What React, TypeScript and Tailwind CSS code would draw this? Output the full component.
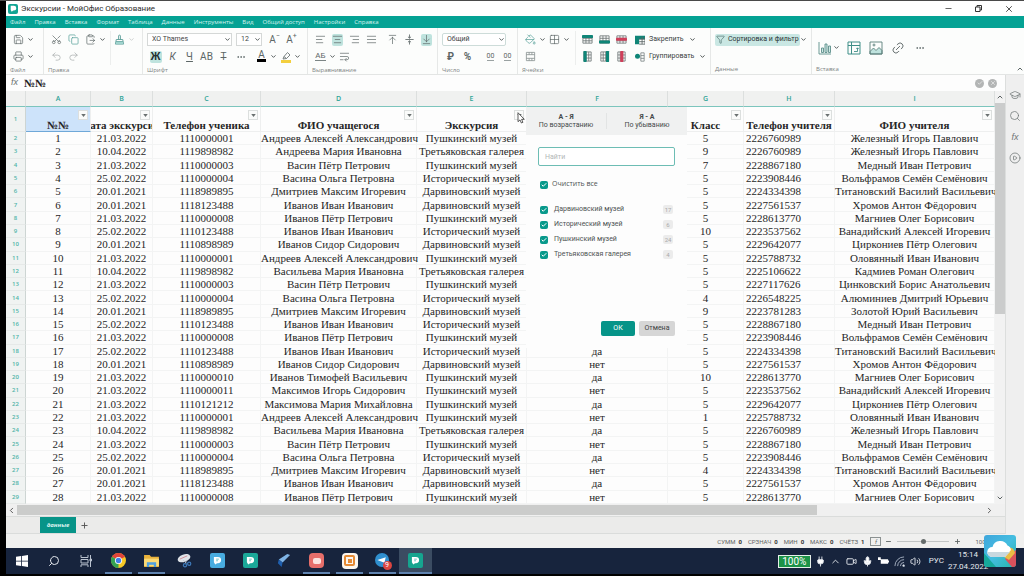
import type { ReactNode } from "react"
import clsx from "clsx"
import {
  AlignCenter,
  AlignJustify,
  AlignLeft,
  AlignRight,
  ArrowDownToLine,
  ArrowUpToLine,
  Check,
  ChevronDown,
  ChevronLeft,
  ChevronRight,
  ChevronUp,
  CirclePlay,
  ClipboardPaste,
  Copy,
  Ellipsis,
  Funnel,
  Grid2x2,
  GraduationCap,
  Link2,
  MessageSquare,
  Mic,
  Minus,
  PaintBucket,
  Plug,
  Plus,
  Printer,
  Redo2,
  Save,
  Scissors,
  Search,
  Undo2,
  Video,
  Volume2,
  WrapText,
  X,
} from "lucide-react"

const menu = [
  "Файл",
  "Правка",
  "Вставка",
  "Формат",
  "Таблица",
  "Данные",
  "Инструменты",
  "Вид",
  "Общий доступ",
  "Настройки",
  "Справка",
]

const letters = ["A", "B", "C", "D", "E", "F", "G", "H", "I"]
const headers = [
  "№№",
  "Дата экскурсии",
  "Телефон ученика",
  "ФИО учащегося",
  "Экскурсия",
  "",
  "Класс",
  "Телефон учителя",
  "ФИО учителя",
]

const P = "Пушкинский музей"
const I = "Исторический музей"
const D = "Дарвиновский музей"
const T = "Третьяковская галерея"

const andreev = "Андреев Алексей Александрович"
const vasin = "Васин Пётр Петрович"
const vasina = "Васина Ольга Петровна"
const dmitriev = "Дмитриев Максим Игоревич"
const ivanov = "Иванов Иван Иванович"
const petrovich = "Иванов Пётр Петрович"
const sidor = "Иванов Сидор Сидорович"
const vasilieva = "Васильева Мария Ивановна"

const teachers = {
  iron: ["2226760989", "Железный Игорь Павлович"],
  copper: ["2228867180", "Медный Иван Петрович"],
  tungsten: ["2223908446", "Вольфрамов Семён Семёнович"],
  titanium: ["2224334398", "Титановский Василий Васильевич"],
  chrome: ["2227561537", "Хромов Антон Фёдорович"],
  magnesium: ["2228613770", "Магниев Олег Борисович"],
  vanadium: ["2223537562", "Ванадийский Алексей Игоревич"],
  zirconium: ["2229642077", "Циркониев Пётр Олегович"],
  tin: ["2225788732", "Оловянный Иван Иванович"],
  cadmium: ["2225106622", "Кадмиев Роман Олегович"],
  zinc: ["2227117626", "Цинковский Борис Анатольевич"],
  aluminium: ["2226548225", "Алюминиев Дмитрий Юрьевич"],
  gold: ["2223781283", "Золотой Юрий Васильевич"],
}

const rows: string[][] = [
  ["21.03.2022", "1110000001", andreev, P, "", "5", ...teachers.iron],
  ["10.04.2022", "1119898982", "Андреева Мария Ивановна", T, "", "9", ...teachers.iron],
  ["21.03.2022", "1110000003", vasin, P, "", "7", ...teachers.copper],
  ["25.02.2022", "1110000004", vasina, I, "", "5", ...teachers.tungsten],
  ["20.01.2021", "1118989895", dmitriev, D, "", "5", ...teachers.titanium],
  ["20.01.2021", "1118123488", ivanov, D, "", "5", ...teachers.chrome],
  ["21.03.2022", "1110000008", petrovich, P, "", "5", ...teachers.magnesium],
  ["25.02.2022", "1110123488", ivanov, I, "", "10", ...teachers.vanadium],
  ["20.01.2021", "1110898989", sidor, D, "", "5", ...teachers.zirconium],
  ["21.03.2022", "1110000001", andreev, P, "", "5", ...teachers.tin],
  ["10.04.2022", "1119898982", vasilieva, T, "", "5", ...teachers.cadmium],
  ["21.03.2022", "1110000003", vasin, P, "", "5", ...teachers.zinc],
  ["25.02.2022", "1110000004", vasina, I, "", "4", ...teachers.aluminium],
  ["20.01.2021", "1118989895", dmitriev, D, "", "9", ...teachers.gold],
  ["25.02.2022", "1110123488", ivanov, I, "", "5", ...teachers.copper],
  ["21.03.2022", "1110000008", petrovich, P, "", "5", ...teachers.tungsten],
  ["25.02.2022", "1110123488", ivanov, I, "да", "5", ...teachers.titanium],
  ["20.01.2021", "1110898989", sidor, D, "нет", "5", ...teachers.chrome],
  ["21.03.2022", "1110000010", "Иванов Тимофей Васильевич", P, "да", "10", ...teachers.magnesium],
  ["21.03.2022", "1110000011", "Максимов Игорь Сидорович", P, "нет", "5", ...teachers.vanadium],
  ["21.03.2022", "1110121212", "Максимова Мария Михайловна", P, "да", "5", ...teachers.zirconium],
  ["21.03.2022", "1110000001", andreev, P, "нет", "1", ...teachers.tin],
  ["10.04.2022", "1119898982", vasilieva, T, "да", "5", ...teachers.iron],
  ["21.03.2022", "1110000003", vasin, P, "нет", "5", ...teachers.copper],
  ["25.02.2022", "1110000004", vasina, I, "да", "5", ...teachers.tungsten],
  ["20.01.2021", "1118989895", dmitriev, D, "нет", "4", ...teachers.titanium],
  ["20.01.2021", "1118123488", ivanov, D, "да", "5", ...teachers.chrome],
  ["21.03.2022", "1110000008", petrovich, P, "нет", "5", ...teachers.magnesium],
]

const filters = [
  [D, "17"],
  [I, "6"],
  [P, "24"],
  [T, "4"],
]

const stats = [
  ["СУММ", "0"],
  ["СРЗНАЧ", "0"],
  ["МИН", "0"],
  ["МАКС", "0"],
  ["СЧЁТЗ", "1"],
]

const ic = "size-[11px] stroke-[1.5]"

function Tool({ label, active, children }: { label: string; active?: boolean; children: ReactNode }) {
  return (
    <button
      aria-label={label}
      className="flex h-[17px] w-[17px] shrink-0 items-center justify-center text-[10px] text-[#5c6666]"
    >
      <span className={clsx("flex h-3 items-center justify-center rounded-xs", active && "bg-[#bfe3de]")}>
        {children}
      </span>
    </button>
  )
}

function More({ label }: { label: string }) {
  return (
    <button aria-label={label} className="flex h-[17px] w-[7px] shrink-0 items-center justify-center">
      <ChevronDown className="size-[7px] shrink-0 stroke-[3] text-[#454d4d]" />
    </button>
  )
}

function Group({ title, className, children }: { title: string; className: string; children: ReactNode }) {
  return (
    <section
      className={clsx("flex shrink-0 flex-col justify-between border-r border-[#e6e8e7] pt-[3px] pl-1", className)}
    >
      <div>{children}</div>
      <h2 className="font-['Open_Sans',sans-serif] text-[6px] leading-[10px] text-[#7c8383]">{title}</h2>
    </section>
  )
}

function Row({ children }: { children: ReactNode }) {
  return <div className="flex h-[17px] items-center">{children}</div>
}

/* Row and column operations: a small grid with one band highlighted */
function CellsIcon({ vertical, band, color }: { vertical?: boolean; band: number; color: string }) {
  return (
    <svg viewBox="0 0 12 12" className="size-[11px]" fill="none">
      <g transform={vertical ? "rotate(90 6 6)" : undefined}>
        <path d="M1 2h10v8H1zM1 4.7h10M1 7.4h10M4.3 2v8M7.7 2v8" stroke="#6d7676" strokeWidth="0.9" />
        <rect x="0" y={band} width="12" height="3.4" rx="0.5" fill={color} />
      </g>
    </svg>
  )
}

function FilterButton({ name }: { name: string }) {
  return (
    <button
      aria-label={"Фильтр: " + name}
      className="absolute top-[3px] right-[2px] flex size-[10px] items-center justify-center border border-[#dcdfde] bg-[#fafbfa]"
    >
      <svg viewBox="0 0 6 4" className="h-[3px] w-[5px]">
        <path d="M0 0h6L3 4z" fill="#6a7070" />
      </svg>
    </button>
  )
}

function Ribbon() {
  return (
    <div className="flex h-[47px] shrink-0 overflow-hidden border-b border-[#e3e5e4] bg-[#fcfdfc]">
      <Group title="Файл" className="w-[38px]">
        <Row>
          <Tool label="Сохранить"><Save className={ic} /></Tool>
          <More label="Сохранить как" />
        </Row>
        <Row>
          <Tool label="Печать"><Printer className={ic} /></Tool>
          <More label="Настройки печати" />
        </Row>
      </Group>

      <Group title="Правка" className="w-[99px]">
        <div className="flex">
          <div className="flex w-[63px] flex-col border-r border-[#eceeed]">
            <Row>
              <Tool label="Вырезать"><Scissors className={clsx(ic, "-rotate-90")} /></Tool>
              <Tool label="Копировать"><Copy className={clsx(ic, "text-[#4f9c95]")} /></Tool>
              <Tool label="Вставить"><ClipboardPaste className={ic} /></Tool>
              <More label="Вставить как" />
            </Row>
            <Row>
              <Tool label="Отменить"><Undo2 className={clsx(ic, "text-[#a3a9a9]")} /></Tool>
              <Tool label="Повторить"><Redo2 className={clsx(ic, "text-[#a3a9a9]")} /></Tool>
            </Row>
          </div>
          <Row>
            <Tool label="Копировать формат">
              <svg viewBox="0 0 12 12" className="size-[11px]" fill="none" stroke="#5c9f99">
                <path d="M5 6V2.2a1 1 0 0 1 2 0V6M2.5 6h7l1 5h-9zM2.2 8.2h7.6" />
                <path d="M2.3 8.5h7.4l.5 2.3H1.9z" fill="#9fd3cd" stroke="none" />
              </svg>
            </Tool>
            <ChevronDown className="size-[7px] stroke-[3] text-[#c9cdcc]" />
          </Row>
        </div>
      </Group>

      <Group title="Шрифт" className="w-[165px]">
        <div className="flex h-[17px] items-center gap-1">
          <div className="relative w-[85px]">
            <select
              aria-label="Шрифт"
              className="block h-[13px] w-full appearance-none border border-[#d5d8d7] bg-white pl-1 text-[7px] text-[#3e4444]"
            >
              <option>XO Thames</option>
            </select>
            <ChevronDown className="pointer-events-none absolute top-[3px] right-px size-[7px] stroke-[3] text-[#454d4d]" />
          </div>
          <div className="relative w-[26px]">
            <select
              aria-label="Размер шрифта"
              className="block h-[13px] w-full appearance-none border border-[#d5d8d7] bg-white pl-1 text-[7px] text-[#3e4444]"
            >
              <option>12</option>
            </select>
            <ChevronDown className="pointer-events-none absolute top-[3px] right-px size-[7px] stroke-[3] text-[#454d4d]" />
          </div>
          <div className="flex">
            <Tool label="Уменьшить шрифт">А<sup className="text-[7px]">−</sup></Tool>
            <Tool label="Увеличить шрифт">А<sup className="text-[7px]">+</sup></Tool>
          </div>
        </div>
        <Row>
          <Tool label="Полужирный" active><b className="w-3 text-[#243232]">Ж</b></Tool>
          <Tool label="Курсив"><i>К</i></Tool>
          <Tool label="Подчёркнутый"><u>Ч</u></Tool>
          <Tool label="Прописные">АВ</Tool>
          <Tool label="Зачёркнутый"><s>Т</s></Tool>
          <Tool label="Ещё"><Ellipsis className="size-[10px]" /></Tool>
          <div className="flex pl-1">
            <Tool label="Цвет текста"><span className="border-b-3 border-black px-px leading-[8px]">А</span></Tool>
            <More label="Выбрать цвет текста" />
            <Tool label="Цвет выделения">
              <svg viewBox="0 0 12 12" className="size-3" fill="none">
                <path d="M4 5.5 7.5 1.5 10 4 6.5 7.5zM4 5.5 3 8l3.5-.5" stroke="#6d7676" strokeWidth="0.9" />
                <path d="M1 9h10v3H1z" fill="#f3cf3e" />
              </svg>
            </Tool>
            <More label="Выбрать цвет выделения" />
          </div>
        </Row>
      </Group>

      <Group title="Выравнивание" className="w-[130px]">
        <Row>
          <Tool label="По левому краю"><AlignLeft className={ic} /></Tool>
          <Tool label="По центру" active><AlignCenter className={ic} /></Tool>
          <Tool label="По правому краю"><AlignRight className={ic} /></Tool>
          <Tool label="По ширине"><AlignJustify className={ic} /></Tool>
          <div className="flex pl-1">
            <Tool label="По верхнему краю"><ArrowUpToLine className={ic} /></Tool>
            <Tool label="По середине">
              <svg viewBox="0 0 12 12" className="size-[11px]" fill="none" stroke="#5c6666">
                <path d="M1.5 6h9M6 .5V4.5M4.3 3 6 4.6 7.7 3M6 11.5V7.5M4.3 9 6 7.4 7.7 9" strokeWidth="0.9" />
              </svg>
            </Tool>
            <Tool label="По нижнему краю" active><ArrowDownToLine className={ic} /></Tool>
          </div>
        </Row>
        <Row>
          <Tool label="Направление текста"><span className="border-b border-[#7c8585] text-[8px] leading-[8px]">АБ</span></Tool>
          <More label="Выбрать направление" />
          <Tool label="Перенос текста"><WrapText className={ic} /></Tool>
        </Row>
      </Group>

      <Group title="Число" className="w-[80px]">
        <Row>
          <div className="relative w-[64px]">
            <select
              aria-label="Формат числа"
              className="block h-[13px] w-full appearance-none rounded-xs border border-[#cddcd9] bg-white pl-1 text-[7px] text-[#3e4444]"
            >
              <option>Общий</option>
            </select>
            <ChevronDown className="pointer-events-none absolute top-[3px] right-px size-[7px] stroke-[3] text-[#454d4d]" />
          </div>
        </Row>
        <Row>
          <Tool label="Денежный"><b>₽</b></Tool>
          <Tool label="Процентный"><b>%</b></Tool>
          <div className="flex pl-[6px]">
            <Tool label="Меньше знаков"><span className="border-b border-[#9aa2a2] text-[7px] leading-[8px]">00</span></Tool>
            <Tool label="Больше знаков"><span className="border-b border-[#9aa2a2] text-[7px] leading-[8px]">00</span></Tool>
          </div>
        </Row>
      </Group>

      <Group title="Ячейки" className="w-[193px]">
        <div className="flex">
          <div className="w-[54px] border-r border-[#eceeed]">
            <Row>
              <Tool label="Заливка"><PaintBucket className={clsx(ic, "text-[#4f9c95]")} /></Tool>
              <More label="Выбрать заливку" />
              <Tool label="Границы"><Grid2x2 className={ic} /></Tool>
              <More label="Выбрать границы" />
            </Row>
            <Row>
              <Tool label="Объединить">
                <svg viewBox="0 0 12 12" className="size-[11px]" fill="none" stroke="#8b9393" strokeWidth="0.9">
                  <path d="M1.5 1.5h9v9h-9zM1.5 4h9M1.5 8h9M4.5 1.5V4M7.5 1.5V4M4.5 8v2.5M7.5 8v2.5" />
                </svg>
              </Tool>
            </Row>
          </div>
          <div className="w-[57px] pl-[3px]">
            <Row>
              <Tool label="Строка выше"><CellsIcon band={1} color="#0f8577" /></Tool>
              <Tool label="Строка ниже"><CellsIcon band={7} color="#0f8577" /></Tool>
              <Tool label="Удалить строку"><CellsIcon band={4} color="#cf3f5a" /></Tool>
            </Row>
            <Row>
              <Tool label="Столбец слева"><CellsIcon vertical band={7} color="#0f8577" /></Tool>
              <Tool label="Столбец справа"><CellsIcon vertical band={1} color="#0f8577" /></Tool>
              <Tool label="Удалить столбец"><CellsIcon vertical band={4} color="#cf3f5a" /></Tool>
            </Row>
          </div>
          <div className="pl-[2px] text-[7px] text-[#3a4141]">
            <button className="flex h-[17px] items-center gap-1">
              <svg viewBox="0 0 12 12" className="size-[10px]">
                <path d="M0 1h12v4H5v6H0z" fill="#0f8577" />
                <path d="M5 5h7M5 8h7M8.5 2v9M5 11h7V2" stroke="#5c6666" fill="none" />
              </svg>
              Закрепить
              <ChevronDown className="ml-px size-[7px] stroke-[3]" />
            </button>
            <button className="flex h-[17px] items-center gap-1">
              <svg viewBox="0 0 12 12" className="size-[10px]" fill="none">
                <circle cx="3" cy="5" r="3" fill="#0f8577" />
                <path d="M7 1h4v10H7zM7 4.3h4M7 7.6h4" stroke="#7c8585" />
              </svg>
              Группировать
              <ChevronDown className="ml-px size-[7px] stroke-[3]" />
            </button>
          </div>
        </div>
      </Group>

      <Group title="Данные" className="w-[101px]">
        <Row>
          <button className="flex h-3 items-center gap-[3px] rounded-xs bg-[#c9e7e3] px-px text-[7px] whitespace-nowrap text-[#2b3535]">
            <Funnel className="size-[9px] text-[#5c7f7b]" />
            Сортировка и фильтр
          </button>
          <More label="Параметры сортировки" />
        </Row>
      </Group>

      <section className="flex min-w-0 flex-1 flex-col justify-between pt-[11px] pl-1">
        <div className="flex h-[17px] items-center gap-[5px]">
          <div className="flex">
            <Tool label="Диаграмма">
              <svg viewBox="0 0 14 14" className="size-[14px]" fill="none" stroke="#5c8f8a" strokeWidth="0.9">
                <path d="M1 1v12h12" />
                <path d="M3.5 7h2v4.5h-2zM7 3h2v8.5H7zM10.5 5h2v6.5h-2z" fill="#cfe9e5" />
              </svg>
            </Tool>
            <More label="Выбрать диаграмму" />
          </div>
          <Tool label="Сводная таблица">
            <svg viewBox="0 0 14 14" className="size-[14px]" fill="none" stroke="#3f8f88">
              <path d="M1 1h12v12H1zM1 4.5h12M4.5 1v12" />
              <path d="M7 10.5h3.5V7M9.3 8l1.2-1.2L11.7 8" strokeWidth="0.9" />
            </svg>
          </Tool>
          <Tool label="Изображение">
            <svg viewBox="0 0 14 14" className="size-[14px]" fill="none" stroke="#5c7f7b" strokeWidth="0.9">
              <path d="M1 10.5 4.5 7 7 9.5 10 6.5l3 3V13H1z" fill="#bfe3de" />
              <path d="M1 1h12v12H1z" />
              <circle cx="5" cy="4" r="1" />
            </svg>
          </Tool>
          <Tool label="Ссылка"><Link2 className="size-[14px] -rotate-45 stroke-[1.5]" /></Tool>
          <Tool label="Ещё"><Ellipsis className="size-[10px]" /></Tool>
        </div>
        <div className="flex items-center justify-between">
          <h2 className="font-['Open_Sans',sans-serif] text-[6px] leading-[10px] text-[#7c8383]">Вставка</h2>
          <button aria-label="Свернуть панель">
            <ChevronUp className="size-[8px] stroke-[3] text-[#5c6666]" />
          </button>
        </div>
      </section>
    </div>
  )
}

function CheckItem({ name, count }: { name: string; count?: string }) {
  return (
    <label className="flex h-[15px] items-center">
      <span className="relative flex size-[8px]">
        <input type="checkbox" defaultChecked className="size-[8px] appearance-none rounded-xs bg-[#08998b]" />
        <Check className="pointer-events-none absolute top-px left-px size-[6px] stroke-[4] text-white" />
      </span>
      <span className={clsx("flex-1", count ? "pl-[6px]" : "pl-1 font-['Open_Sans',sans-serif]")}>{name}</span>
      {count && (
        <span className="w-[10px] rounded-xs bg-[#ececec] text-center text-[6px] leading-[9px] text-[#a9a9a9]">
          {count}
        </span>
      )}
    </label>
  )
}

function FilterPopup() {
  return (
    <div className="absolute top-[16px] left-[520px] w-[161px] bg-[#fdfdfd] text-[7px] text-[#4d5353]">
      <div className="flex h-[28px] items-center bg-[#f0f1f1] text-[#444a4a]">
        <button className="h-4 flex-1 border-r border-[#e2e4e4] leading-[8px]">
          <b className="block">А - Я</b>По возрастанию
        </button>
        <button className="h-4 flex-1 leading-[8px]">
          <b className="block">Я - А</b>По убыванию
        </button>
      </div>
      <div className="px-3 py-3">
        <input
          type="text"
          aria-label="Найти"
          placeholder="Найти"
          autoFocus
          className="block h-[19px] w-full rounded-xs border border-[#6dbdb4] bg-white pl-[6px] text-[7px] outline-none placeholder:text-[#b2b6b6]"
        />
        <div className="px-[2px] pt-[11px]">
          <CheckItem name="Очистить все" />
          <div className="pt-[10px]">
            {filters.map(([name, count]) => (
              <CheckItem key={name} name={name} count={count} />
            ))}
          </div>
        </div>
        <div className="flex justify-end gap-1 pt-[59px]">
          <button className="h-[15px] w-[34px] rounded-xs bg-[#069488] text-white">ОК</button>
          <button className="h-[15px] w-[36px] rounded-xs bg-[#d6d6d6] text-[#3c4242]">Отмена</button>
        </div>
      </div>
    </div>
  )
}

function Sheet() {
  return (
    <div className="relative flex min-h-0 flex-1 bg-[#fdfdfd]">
      <div className="min-w-0 flex-1 overflow-hidden">
        <table className="h-full w-full table-fixed border-separate border-spacing-0 font-['Liberation_Serif','Times_New_Roman',serif] text-[11px] leading-[12px] text-[#262626]">
          <colgroup>
            <col className="w-5" />
            <col className="w-[65px]" />
            <col className="w-[62px]" />
            <col className="w-[108px]" />
            <col className="w-[156px]" />
            <col className="w-[110px]" />
            <col className="w-[141px]" />
            <col className="w-[76px]" />
            <col className="w-[91px]" />
            <col />
          </colgroup>
          <thead>
            <tr className="h-4 bg-[#f0f1f0] font-['Open_Sans',sans-serif] text-[7px] text-[#2fa497]">
              <th className="border-r border-b border-[#dcdfde] border-b-[#7cc5bd]" />
              {letters.map((l) => (
                <th key={l} className="border-r border-b border-[#dcdfde] border-b-[#7cc5bd] font-semibold">
                  {l}
                </th>
              ))}
            </tr>
          </thead>
          <tbody>
            <tr className="h-[25px]">
              <th className="border-r border-b border-[#cdd5d3] border-b-[#e6e9e8] bg-[#f0f3f2] font-['Open_Sans',sans-serif] text-[6px] font-semibold text-[#4fb3a8]">
                1
              </th>
              {headers.map((h, i) => (
                <td
                  key={i}
                  className={clsx(
                    "relative border-r border-b border-[#eeefef] p-0 align-bottom font-bold",
                    i === 0 && "border-b-[#6fa8d8] bg-[#cde3fa]",
                  )}
                >
                  <div className="flex justify-center overflow-hidden whitespace-nowrap">{h}</div>
                  {i !== 5 && <FilterButton name={h} />}
                </td>
              ))}
            </tr>
            {rows.map((row, i) => (
              <tr key={i}>
                <th className="border-r border-b border-[#cdd5d3] border-b-[#e6e9e8] bg-[#f0f3f2] p-0 font-['Open_Sans',sans-serif] text-[6px] font-semibold text-[#4fb3a8]">
                  {i + 2}
                </th>
                {[String(i + 1), ...row].map((cell, j) => (
                  <td
                    key={j}
                    className={clsx(
                      "border-r border-b border-[#f3f4f4] p-0 whitespace-nowrap",
                      j === 7 ? "pl-[2px] text-left" : "text-center",
                    )}
                  >
                    {cell}
                  </td>
                ))}
              </tr>
            ))}
          </tbody>
        </table>
      </div>
      <div className="flex w-[10px] shrink-0 flex-col items-center bg-[#f2f2f2]">
        <ChevronUp className="my-[2px] size-[8px] shrink-0 stroke-[3] text-[#5c6262]" />
        <div className="w-full basis-[51%] bg-[#cbcccc]" />
        <ChevronDown className="mt-auto mb-[2px] size-[8px] shrink-0 stroke-[3] text-[#5c6262]" />
      </div>
      <FilterPopup />
      <svg viewBox="0 0 8 12" className="absolute top-[21px] left-[511px] h-3 w-2">
        <path d="M1 .7v9l2-1.8L4.4 11l1.5-.7-1.3-3H7.3z" fill="#fff" stroke="#333" strokeWidth="0.8" />
      </svg>
    </div>
  )
}

function Task({ label, open, active, children }: { label: string; open?: boolean; active?: boolean; children: ReactNode }) {
  return (
    <button
      aria-label={label}
      className={clsx("flex h-full w-[33px] flex-col items-center justify-end", active && "bg-[#3b4c62]")}
    >
      <span className="flex flex-1 items-center pt-px">{children}</span>
      <span className={clsx("h-[2px]", open && "bg-[#5f83b0]", active ? "w-full" : "w-[27px]")} />
    </button>
  )
}

function OfficeTile({ className }: { className: string }) {
  return (
    <span className={clsx("flex size-[15px] items-center justify-center rounded-xs", className)}>
      <svg viewBox="0 0 10 10" className="size-[9px]">
        <path d="M1 1h4.5a3.5 3.5 0 0 1 0 7H4.5L2.5 9.5 1 7z" fill="#fff" />
        <path d="M3.5 3.5h3M3.5 5.3h2" stroke="#58b7b8" strokeWidth="0.9" />
      </svg>
    </span>
  )
}

function Taskbar() {
  return (
    <footer className="flex h-[26px] shrink-0 items-center justify-between bg-[#17243d] text-[#e4e8ee]">
      <nav className="flex h-full">
        <button aria-label="Пуск" className="flex w-8 items-center justify-center">
          <svg viewBox="0 0 12 12" className="size-3" fill="#fff">
            <path d="M0 1.7 5.2 1v4.7H0zM6 .9 12 0v5.7H6zM0 6.4h5.2V11L0 10.3zM6 6.4h6V12l-6-.9z" />
          </svg>
        </button>
        <button aria-label="Поиск" className="flex w-8 items-center justify-center">
          <Search className="size-3 -scale-x-100" />
        </button>
        <button aria-label="Представление задач" className="flex w-8 items-center justify-center">
          <svg viewBox="0 0 12 12" className="size-3" fill="none" stroke="#b9c2cf">
            <path d="M1 0v2.5h7V0M1 4.5h7v3.5H1zM1 12V9.8h7V12M10.5 0v12M10 4h1.5v2H10z" />
          </svg>
        </button>
        <Task label="Chrome" open>
          <svg viewBox="0 0 16 16" className="size-[15px]">
            <circle cx="8" cy="8" r="8" fill="#f6c926" />
            <path d="M8 8 1.07 4A8 8 0 0 1 14.93 4z" fill="#e0443a" />
            <path d="M8 8 1.07 4A8 8 0 0 0 8 16z" fill="#34a353" />
            <circle cx="8" cy="8" r="3.8" fill="#fff" />
            <circle cx="8" cy="8" r="2.9" fill="#3f7fe8" />
          </svg>
        </Task>
        <Task label="Проводник" open>
          <svg viewBox="0 0 16 14" className="h-[13px] w-[15px]">
            <path d="M0 1h6l1.5 2H16v11H0z" fill="#e9b23c" />
            <path d="M0 5h16v8H0z" fill="#fbda75" />
            <path d="M3 14V9h10v5h-2.5v-2.5h-5V14z" fill="#4d9fe0" />
          </svg>
        </Task>
        <Task label="Ножницы">
          <svg viewBox="0 0 16 16" className="size-[15px]" fill="none">
            <ellipse cx="7.5" cy="5.5" rx="7" ry="4" transform="rotate(-20 7.5 5.5)" fill="#dfe3e8" />
            <path d="M3 6.5 11 3" stroke="#d08b94" />
            <path d="m7 8 3 3M10 8l-1 3" stroke="#aeb8c4" />
            <circle cx="8.5" cy="13" r="1.7" stroke="#3e79b8" strokeWidth="1.3" />
            <circle cx="13" cy="11.5" r="1.7" stroke="#3e79b8" strokeWidth="1.3" />
          </svg>
        </Task>
        <Task label="МойОфис Текст"><OfficeTile className="bg-[#48ace0]" /></Task>
        <Task label="МойОфис Таблица"><OfficeTile className="bg-[#1ba899]" /></Task>
        <Task label="Редактор">
          <svg viewBox="0 0 16 16" className="size-[15px]">
            <path d="M3 7 12 1l3 1-8 8z" fill="#7fb4e6" />
            <path d="m3 7 4 3-1 5-4-4z" fill="#1f5fae" />
          </svg>
        </Task>
        <Task label="Запись экрана" open>
          <span className="flex size-[15px] items-center justify-center rounded bg-[#e66e6a]">
            <span className="h-[6px] w-2 rounded-xs bg-[#fbe3df]" />
          </span>
        </Task>
        <Task label="Презентация" open>
          <span className="flex size-4 items-center justify-center rounded bg-[#fbf6ef]">
            <span className="flex size-[11px] items-center justify-center rounded-xs border-2 border-[#e58a35]">
              <span className="size-[4px] bg-[#e58a35]" />
            </span>
          </span>
        </Task>
        <Task label="Сообщения" open>
          <span className="relative flex size-4">
            <svg viewBox="0 0 16 16" className="size-[15px]">
              <circle cx="7.5" cy="7.5" r="7.5" fill="#2f8fcf" />
              <path d="m2.5 7.5 9-3-1.5 6z" fill="#fff" />
            </svg>
            <span className="absolute -right-px -bottom-px size-[9px] rounded-full bg-[#dc4640] text-center text-[7px] leading-[9px] text-white">
              9
            </span>
          </span>
        </Task>
        <Task label="МойОфис" open active><OfficeTile className="bg-[#16a58f]" /></Task>
      </nav>

      <div className="flex items-center gap-1 pr-[14px]">
        <span className="w-[33px] border border-[#e6efe9] bg-[#1c9247] text-center text-[10px] leading-[11px] text-white">100%</span>
        <Plug className="size-[11px] fill-white" />
        <span className="flex items-center gap-[5px] pr-1">
          <ChevronUp className="size-[11px]" />
          <Video className="size-[11px]" />
          <Mic className="size-[11px] fill-white" />
          <svg viewBox="0 0 12 10" className="h-[10px] w-[11px]">
            <path d="M3 3h8v5H3zM11 4.5h1v2h-1zM0 1h3v3H0z" fill="#fff" />
          </svg>
          <svg viewBox="0 0 12 12" className="size-[11px]" fill="none" stroke="#a9b4c4">
            <path d="M1 11A10 10 0 0 1 11 1M4 11a7 7 0 0 1 7-7M7 11a4 4 0 0 1 4-4" />
            <circle cx="10.5" cy="10.5" r="1" fill="#fff" />
          </svg>
          <Volume2 className="size-[11px]" />
        </span>
        <span className="text-[8px]">РУС</span>
        <div className="w-10 text-center text-[8px] leading-[12px]">
          <div>15:14</div>
          <div>27.04.2022</div>
        </div>
        <MessageSquare className="ml-[6px] size-3" />
      </div>
    </footer>
  )
}

export default function App() {
  return (
    <div className="relative flex h-screen flex-col overflow-hidden border-t border-[#4a4a4a] border-b-2 border-b-black bg-black pl-[6px] font-[Roboto,'Noto_Sans',sans-serif]">
      <header className="flex h-[15px] shrink-0 items-center bg-white pl-[2px]">
        <span className="flex size-[10px] items-center justify-center rounded-xs bg-[#12a594]">
          <svg viewBox="0 0 10 10" className="size-[7px]">
            <path d="M1 1h4.5a3.5 3.5 0 0 1 0 7H4.5L2.5 9.5 1 7z" fill="#fff" />
          </svg>
        </span>
        <h1 className="flex-1 pl-[3px] text-[8px] text-[#2c2c2c]">Экскурсии - МойОфис Образование</h1>
        <div className="flex items-center gap-[21px] pr-[10px] text-[#333]">
          <button aria-label="Свернуть"><Minus className="size-[9px]" /></button>
          <button aria-label="Развернуть">
            <svg viewBox="0 0 9 9" className="size-[9px]" fill="none" stroke="currentColor">
              <path d="M1.5 3h4.5v4.5H1.5zM3 3V1.5h4.5V6H6" />
            </svg>
          </button>
          <button aria-label="Закрыть"><X className="size-[10px]" /></button>
        </div>
      </header>

      <nav className="flex h-3 shrink-0 items-center gap-[9px] bg-[#05a294] pl-1 font-['Open_Sans',sans-serif] text-[6px] text-[#d5f3ef]">
        {menu.map((m) => (
          <a key={m} href="#">{m}</a>
        ))}
      </nav>

      <Ribbon />

      <div className="flex min-h-0 flex-1">
        <main className="flex min-w-0 flex-1 flex-col">
          <div className="flex h-4 shrink-0 items-center bg-[#fdfdfd] pr-2 pl-[5px]">
            <i className="font-['Liberation_Sans',sans-serif] text-[9px] text-[#6a7070]">fx</i>
            <input
              aria-label="Строка формул"
              defaultValue="№№"
              className="ml-[6px] h-full min-w-0 flex-1 font-['Liberation_Serif','Times_New_Roman',serif] text-[11px] font-bold text-[#222]"
            />
            <button aria-label="Принять" className="mr-[4px] flex size-[9px] items-center justify-center rounded-full bg-[#b3b5b5]">
              <Check className="size-[6px] stroke-[3] text-[#e8e8e8]" />
            </button>
            <button aria-label="Отменить ввод" className="flex size-[9px] items-center justify-center rounded-full bg-[#b3b5b5]">
              <X className="size-[6px] stroke-[3] text-[#e8e8e8]" />
            </button>
          </div>

          <Sheet />

          <div className="flex h-3 shrink-0 items-center bg-[#f0f0f0] pr-[11px]">
            <ChevronLeft className="mx-px size-[9px] shrink-0 stroke-[2.5] text-[#555]" />
            <div className="h-[10px] basis-[81%] bg-[#cbcccb]" />
            <ChevronRight className="ml-auto size-[9px] shrink-0 stroke-[2.5] text-[#555]" />
          </div>

          <div className="flex h-[18px] shrink-0 items-center border-y border-[#dadcdb] bg-[#ebebea] pl-[34px]">
            <button className="h-full w-9 bg-[#079488] font-['Open_Sans',sans-serif] text-[6px] font-bold text-[#dff5f2] italic">
              данные
            </button>
            <button aria-label="Добавить лист" className="pl-1">
              <Plus className="size-[9px] stroke-[2.5] text-[#555]" />
            </button>
          </div>
        </main>

        <aside className="flex w-[19px] shrink-0 flex-col items-center gap-[9px] border-l border-[#dcdedd] bg-[#efefef] pt-[14px] text-[#6f7575]">
          <button aria-label="Обучение"><GraduationCap className="size-3 stroke-[1.5]" /></button>
          <button aria-label="Поиск"><Search className="size-3 stroke-[1.5]" /></button>
          <button aria-label="Функции" className="font-['Liberation_Sans',sans-serif] text-[9px] leading-3 italic">fx</button>
          <button aria-label="Макросы"><CirclePlay className="size-3 stroke-[1.5]" /></button>
        </aside>
      </div>

      <div className="flex h-[14px] shrink-0 items-center justify-end bg-[#f0f0ef] pr-[34px] text-[6px] text-[#5d6363]">
        <dl className="flex gap-[6px]">
          {stats.map(([k, v]) => (
            <div key={k} className="flex gap-[3px]">
              <dt>{k}</dt>
              <dd className="font-bold text-[#333]">{v}</dd>
            </div>
          ))}
        </dl>
        <i className="ml-[6px] w-[11px] border border-[#8b9191] text-center leading-[7px]">f</i>
        <button aria-label="Уменьшить" className="ml-1">
          <Minus className="size-[7px] stroke-[3]" />
        </button>
        <span className="relative mx-[5px] flex h-2 w-[52px] items-center">
          <span className="h-px w-full bg-[#c2c5c5]" />
          <input
            type="range"
            aria-label="Масштаб"
            defaultValue={50}
            className="absolute h-2 w-full appearance-none bg-transparent [&::-webkit-slider-thumb]:size-[5px] [&::-webkit-slider-thumb]:appearance-none [&::-webkit-slider-thumb]:rounded-full [&::-webkit-slider-thumb]:bg-[#666c6c]"
          />
        </span>
        <button aria-label="Увеличить">
          <Plus className="size-[7px] stroke-[3]" />
        </button>
        <span className="pl-[14px]">100%</span>
      </div>

      <Taskbar />

      <svg viewBox="0 0 32 32" className="absolute right-2 bottom-[7px] size-8">
        <defs>
          <linearGradient id="sky" x1="0" y1="0" x2="1" y2="1">
            <stop offset="0" stopColor="#3fa6dc" />
            <stop offset="0.5" stopColor="#44bde0" />
            <stop offset="1" stopColor="#25b5a9" />
          </linearGradient>
          <clipPath id="tile">
            <rect width="32" height="32" rx="3" />
          </clipPath>
        </defs>
        <g clipPath="url(#tile)">
          <rect width="32" height="32" fill="url(#sky)" />
          <path d="M0 18 12 32H0z" fill="#16a89b" />
          <path d="M21 24 32 15v17h-4z" fill="#d9515c" />
          <path d="M20 22a6 6 0 0 1 10-7l1 3-6 7z" fill="#e9bd45" />
          <path d="M8 22a5 5 0 0 1 .5-10 8 8 0 0 1 15-1.5A5.5 5.5 0 0 1 27 15l-6 7z" fill="#fff" />
          <path d="M3.5 17A5 5 0 0 0 8 22h13l5-5z" fill="#c9d8df" />
        </g>
      </svg>
    </div>
  )
}
